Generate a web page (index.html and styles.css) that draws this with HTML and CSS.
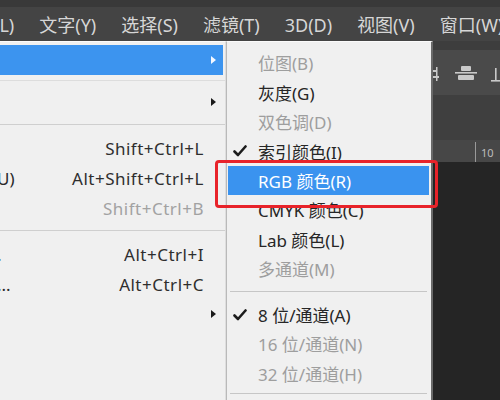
FILE: index.html
```html
<!DOCTYPE html>
<html lang="zh-CN">
<head>
<meta charset="utf-8">
<title>图像 模式</title>
<link rel="stylesheet" href="styles.css">
</head>
<body>
<div class="app">
  <div class="menubar">
    <span class="mb-item first">图层(L)</span>
    <span class="mb-item">文字(Y)</span>
    <span class="mb-item">选择(S)</span>
    <span class="mb-item">滤镜(T)</span>
    <span class="mb-item">3D(D)</span>
    <span class="mb-item">视图(V)</span>
    <span class="mb-item">窗口(W)</span>
  </div>
  <div class="main">
    <div class="menu left">
      <div class="row active"><span class="label"></span><span class="arrow light"></span></div>
      <div class="sep tight"></div>
      <div class="row"><span class="label"></span><span class="arrow"></span></div>
      <div class="sep"></div>
      <div class="row"><span class="label"></span><span class="key">Shift+Ctrl+L</span></div>
      <div class="row"><span class="label cut">U)</span><span class="key">Alt+Shift+Ctrl+L</span></div>
      <div class="row"><span class="label"></span><span class="key dis">Shift+Ctrl+B</span></div>
      <div class="sep"></div>
      <div class="row"><span class="label cut">.</span><span class="key">Alt+Ctrl+I</span></div>
      <div class="row"><span class="label cut">...</span><span class="key">Alt+Ctrl+C</span></div>
      <div class="row"><span class="label"></span><span class="arrow"></span></div>
    </div>
    <div class="menu sub">
      <div class="item dis">位图(B)</div>
      <div class="item">灰度(G)</div>
      <div class="item dis">双色调(D)</div>
      <div class="item checked"><svg class="check" viewBox="0 0 14 12"><path d="M1.5 6.5 L5 10 L12.5 1.5" /></svg>索引颜色(I)</div>
      <div class="item active">RGB 颜色(R)</div>
      <div class="item">CMYK 颜色(C)</div>
      <div class="item">Lab 颜色(L)</div>
      <div class="item dis">多通道(M)</div>
      <div class="sep"></div>
      <div class="item checked"><svg class="check" viewBox="0 0 14 12"><path d="M1.5 6.5 L5 10 L12.5 1.5" /></svg>8 位/通道(A)</div>
      <div class="item dis">16 位/通道(N)</div>
      <div class="item dis">32 位/通道(H)</div>
      <div class="sep tight"></div>
    </div>
    <div class="workspace">
      <div class="options">
        <svg class="align-icons" viewBox="0 0 68 54" width="68" height="54">
          <g fill="#c9c9c9">
            <rect x="0" y="25" width="4" height="2"/>
            <rect x="0" y="31" width="6" height="2"/>
            <rect x="3" y="22" width="1.5" height="14"/>
            <rect x="22" y="27" width="22" height="1.6"/>
            <rect x="28" y="21" width="10" height="5" rx="1"/>
            <rect x="25" y="30" width="16" height="5" rx="1"/>
            <rect x="62" y="23" width="1.6" height="13"/>
            <rect x="58" y="35" width="10" height="1.6"/>
          </g>
        </svg>
      </div>
      <div class="tabs"></div>
      <div class="ruler"><span class="tick"></span><span class="num">10</span></div>
      <div class="canvas"></div>
    </div>
  </div>
  <div class="annot"></div>
</div>
</body>
</html>
```

FILE: styles.css
```css
html, body {
  margin: 0;
  padding: 0;
}
body {
  width: 500px;
  height: 400px;
  overflow: hidden;
  background: #262626;
  font-family: "Noto Sans", "Noto Sans CJK SC", sans-serif;
}
.app {
  position: relative;
  width: 500px;
  height: 400px;
  overflow: hidden;
  display: flex;
  flex-direction: column;
}
.menubar {
  height: 34px;
  border-top: 7px solid #393939;
  background: #444444;
  display: flex;
  align-items: center;
  gap: 25px;
  white-space: nowrap;
  overflow: hidden;
  flex: none;
}
.mb-item {
  color: #d6d6d6;
  font-size: 18px;
  line-height: 22px;
  padding-top: 2px;
}
.mb-item.first {
  margin-left: -42px;
}
.main {
  flex: 1;
  display: flex;
  min-height: 0;
}
.menu {
  background: #f0f0f0;
  display: flex;
  flex-direction: column;
  border-top: 1px solid #fbfbfb;
}
.menu.left {
  width: 225px;
  border-right: 1px solid #dedede;
  padding-top: 3px;
  flex: none;
}
.row {
  height: 30px;
  display: flex;
  align-items: center;
  justify-content: space-between;
  padding-right: 6px;
  margin-right: 2px;
  font-size: 17px;
  color: #2a2a2a;
  white-space: nowrap;
}
.row.active {
  background: #3c94ef;
}
.label.cut {
  margin-left: -3px;
  color: #2a2a2a;
}
.key {
  margin-right: 13px;
  color: #2e2e2e;
  letter-spacing: 0.5px;
}
.key.dis {
  color: #a2a2a2;
}
.arrow {
  width: 0;
  height: 0;
  border-top: 4px solid transparent;
  border-bottom: 4px solid transparent;
  border-left: 5px solid #1a1a1a;
  margin-right: 1px;
}
.arrow.light {
  border-left-color: #f4f8ff;
}
.sep {
  height: 1px;
  background: #cfcfcf;
  margin: 7px 0 8px;
  flex: none;
}
.sep.tight {
  margin: 5px 0 6px;
  background: #dddddd;
}
.menu.sub {
  width: 204px;
  flex: none;
  border-left: 1px solid #b9b9b9;
  border-right: 2px solid #6a6a6a;
  padding-top: 6px;
}
.menu.sub .sep {
  margin-left: 3px;
  margin-right: 4px;
  background: #c6c6c6;
}
.item {
  position: relative;
  height: 30px;
  display: flex;
  align-items: center;
  padding-left: 30px;
  margin: 0 2px 0 1px;
  font-size: 17px;
  color: #262626;
  white-space: nowrap;
}
.item.dis {
  color: #9e9e9e;
}
.item.active {
  background: #3a93ef;
  color: #ffffff;
}
.check {
  position: absolute;
  left: 5px;
  top: 9px;
  width: 14px;
  height: 12px;
}
.check path {
  fill: none;
  stroke: #1c1c1c;
  stroke-width: 2.6;
  stroke-linecap: round;
  stroke-linejoin: round;
}
.workspace {
  flex: 1;
  display: flex;
  flex-direction: column;
  min-width: 0;
}
.options {
  height: 45px;
  background: #4a4a4a;
  border-top: 9px solid #3d3d3d;
  overflow: hidden;
  flex: none;
}
.align-icons {
  display: block;
  margin-top: -5px;
}
.tabs {
  height: 45px;
  background: #3f3f3f;
  flex: none;
}
.ruler {
  height: 22px;
  background: #474747;
  display: flex;
  align-items: flex-end;
  flex: none;
}
.tick {
  width: 1px;
  height: 20px;
  background: #9a9a9a;
  margin-left: 42px;
}
.num {
  color: #bdbdbd;
  font-size: 11px;
  line-height: 14px;
  margin-left: 5px;
  margin-bottom: 2px;
}
.canvas {
  flex: 1;
  background: #252525;
}
.annot {
  position: absolute;
  left: 215px;
  top: 160px;
  width: 217px;
  height: 42px;
  border: 3px solid #e8232a;
  border-radius: 4px;
}
```
